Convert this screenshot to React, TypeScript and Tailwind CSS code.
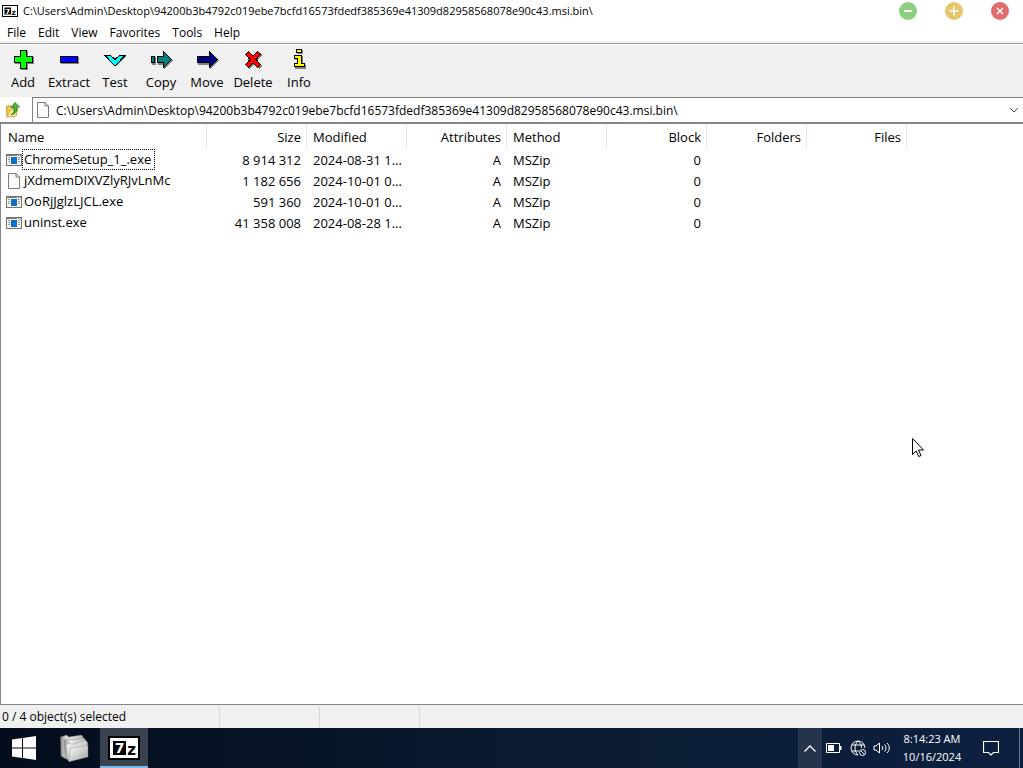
import type { ReactNode } from 'react';

const PATH = 'C:\\Users\\Admin\\Desktop\\94200b3b4792c019ebe7bcfd16573fdedf385369e41309d82958568078e90c43.msi.bin\\';

const menus = ['File', 'Edit', 'View', 'Favorites', 'Tools', 'Help'];

type Tool = {
  label: string;
  icon: ReactNode;
}

const tools: Tool[] = [
  {
    label: 'Add',
    icon: (
      <>
        <path d="M10 3h7v6h6v7h-6v6h-7v-6h-6v-7h6z" fill="#808080" />
        <path d="M9 2h7v6h6v7h-6v6h-7v-6h-6v-7h6z" fill="#000" />
        <path d="M10 3h5v6h6v5h-6v6h-5v-6h-6v-5h6z" fill="#00ff00" />
      </>
    ),
  },
  {
    label: 'Extract',
    icon: (
      <>
        <path d="M4 9h18v7h-18z" fill="#808080" />
        <path d="M3 8h18v7h-18z" fill="#000" />
        <path d="M4 9h16v5h-16z" fill="#0000ff" />
      </>
    ),
  },
  {
    label: 'Test',
    icon: (
      <>
        <path d="M3 8h5l5 4 5-4h5l-10 11z" fill="#808080" />
        <path d="M2 7.5h5.500l4.500 4 4.500-4h5.500l-10 10.500z" fill="#00ffff" stroke="#000" />
      </>
    ),
  },
  {
    label: 'Copy',
    icon: (
      <>
        <path d="M3 9h4v8h-4zM9 9h6v-5l9 9-9 8v-4h-6z" fill="#808080" />
        <path d="M2.500 8.500h3v6h-3zM8.500 8.500h6v-5l8 8-8 8v-5h-6z" fill="#008080" stroke="#000" />
      </>
    ),
  },
  {
    label: 'Move',
    icon: (
      <>
        <path d="M3 9h12v-5l9 9-9 8v-4h-12z" fill="#808080" />
        <path d="M2.500 8.500h12v-5l8 8-8 8v-5h-12z" fill="#000080" stroke="#000" />
      </>
    ),
  },
  {
    label: 'Delete',
    icon: (
      <>
        <path d="M8 4l5 5 5-5 3 3-5 5 5 6-3 3-5-5-5 5-3-3 5-6-5-5z" fill="#808080" />
        <path d="M7.500 3.500l4.500 4.500 4.500-4.500 3 3-4.500 5 4.500 5-3 3-4.500-4.500-4.500 4.500-3-3 4.500-5-4.500-5z" fill="#ff0000" stroke="#000" />
      </>
    ),
  },
  {
    label: 'Info',
    icon: (
      <>
        <path d="M10 2h6v4h-6zM8 8h8v9h3v4h-11v-4h3v-5h-3z" fill="#808080" />
        <path d="M9.500 1.500h5v3h-5zM7.500 7.500h7v8h3v3h-10v-3h3v-5h-3z" fill="#ffff00" stroke="#000" />
      </>
    ),
  },
];

const columns = [
  { name: 'Name', right: false },
  { name: 'Size', right: true },
  { name: 'Modified', right: false },
  { name: 'Attributes', right: true },
  { name: 'Method', right: false },
  { name: 'Block', right: true },
  { name: 'Folders', right: true },
  { name: 'Files', right: true },
];

const files = [
  { name: 'ChromeSetup_1_.exe', size: '8 914 312', modified: '2024-08-31 1...', exe: true, focused: true },
  { name: 'jXdmemDIXVZlyRJvLnMc', size: '1 182 656', modified: '2024-10-01 0...', exe: false, focused: false },
  { name: 'OoRjJglzLJCL.exe', size: '591 360', modified: '2024-10-01 0...', exe: true, focused: false },
  { name: 'uninst.exe', size: '41 358 008', modified: '2024-08-28 1...', exe: true, focused: false },
];

const SevenZipIcon = ({ className }: { className: string }) => (
  <svg className={className} viewBox="0 0 32 24" preserveAspectRatio="xMidYMid meet" aria-hidden="true">
    <rect width="32" height="24" fill="#000" />
    <rect x="2" y="2" width="28" height="20" fill="#fff" />
    <rect x="5" y="5" width="13" height="14" fill="#000" />
    <text x="11.500" y="17" textAnchor="middle" fontFamily="DejaVu Sans" fontWeight="700" fontSize="14" fill="#fff">7</text>
    <text x="23.500" y="19" textAnchor="middle" fontFamily="DejaVu Sans" fontWeight="700" fontSize="15" fill="#000">z</text>
  </svg>
);

const PageIcon = ({ className }: { className: string }) => (
  <svg className={className} viewBox="0 0 12 16" aria-hidden="true">
    <path d="M.5.5h7.500l3.500 3.500v11.500h-11z" fill="#fafafa" stroke="#7a7a7a" />
    <path d="M8 .5v3.500h3.500" fill="none" stroke="#7a7a7a" />
  </svg>
);

const ExeIcon = () => (
  <svg className="h-3 w-4" viewBox="0 0 16 12" shapeRendering="crispEdges" aria-hidden="true">
    <rect width="16" height="12" fill="#767670" />
    <rect x="1" y="2" width="14" height="9" fill="#f4f4f4" />
    <path d="M11 1.500h1M13 1.500h1" stroke="#fff" />
    <rect x="5" y="3" width="6" height="7" fill="#0f6fc6" />
    <path d="M2 3.500h2M2 5.500h2M2 7.500h2M12 3.500h2M12 5.500h2M12 7.500h2" stroke="#999" />
  </svg>
);

const TitleBar = () => (
  <header className="flex h-[22px] items-center bg-white">
    <SevenZipIcon className="ml-[2px] h-3 w-4" />
    <h1 className="ml-[5px] flex-1 truncate text-[11px] leading-4">{PATH}</h1>
    <button aria-label="Minimize" className="flex w-[46px] justify-center">
      <svg className="size-[18px]" viewBox="0 0 18 18">
        <circle cx="9" cy="9" r="9" fill="#8ccf7e" />
        <path d="M5 9h8" stroke="#fff" strokeWidth="2" />
      </svg>
    </button>
    <button aria-label="Maximize" className="flex w-[46px] justify-center">
      <svg className="size-[18px]" viewBox="0 0 18 18">
        <circle cx="9" cy="9" r="9" fill="#e5c76b" />
        <path d="M4.500 9h9M9 4.500v9" stroke="#fff" strokeWidth="1.500" />
      </svg>
    </button>
    <button aria-label="Close" className="flex w-[46px] justify-center">
      <svg className="size-[18px]" viewBox="0 0 18 18">
        <circle cx="9" cy="9" r="9" fill="#e06c6c" />
        <path d="M6 6l6 6M12 6l-6 6" stroke="#fff" strokeWidth="1.500" />
      </svg>
    </button>
  </header>
);

const AddressBar = () => (
  <div className="flex h-[25px] bg-white">
    <button aria-label="Up one level" className="flex w-8 items-center pl-[6px]">
      <svg className="h-4 w-[14px]" viewBox="0 0 14 16">
        <path d="M.5 4.500l4-1 1 1.500 5-.5v9l-9.500 1.500z" fill="#eecb5a" stroke="#c99a2e" />
        <path d="M1 15l3-7 8-1.500-2 7.500z" fill="#fbe795" stroke="#d5aa3d" strokeWidth=".8" />
        <path d="M5 12.500c3-1 3.500-3.500 3-7h-3L9 .5l4.500 4.500h-2.500c.5 4-1 7-6 7.500z" fill="#4eb33c" stroke="#247a1c" strokeWidth=".8" />
      </svg>
    </button>
    <div className="flex min-w-0 flex-1 items-center border-t border-l border-[#828282] pl-[4px]">
      <PageIcon className="h-4 w-3 shrink-0" />
      <input aria-label="Path" defaultValue={PATH} className="ml-[7px] min-w-0 flex-1 pt-[2px] text-[12px] leading-5 outline-none" />
      <button aria-label="Show path list" className="flex h-full w-[18px] items-center justify-center">
        <svg className="h-[6px] w-[10px]" viewBox="0 0 10 6">
          <path d="M1 1l4 4 4-4" fill="none" stroke="#555" />
        </svg>
      </button>
    </div>
  </div>
);

const FileList = () => (
  <main className="min-h-0 flex-1 overflow-hidden border-t-2 border-b border-l border-[#828790] bg-white">
    <table className="w-[906px] table-fixed border-separate border-spacing-0 text-[13px] leading-5">
      <colgroup>
        <col className="w-[206px]" />
        <col span={7} className="w-[100px]" />
      </colgroup>
      <thead>
        <tr className="h-[25px]">
          {columns.map((col) => (
            <th
              key={col.name}
              className={`border-r border-[#e5e5e5] p-0 font-normal ${col.right ? 'pr-[5px] text-right' : 'pl-[6px] text-left first:pl-[7px]'}`}
            >
              {col.name}
            </th>
          ))}
        </tr>
      </thead>
      <tbody>
        {files.map((file) => (
          <tr key={file.name} className="h-[21px]">
            <td className="p-0">
              <div className="flex items-center pl-[5px]">
                <span className="flex w-4 justify-center">
                  {file.exe ? <ExeIcon /> : <PageIcon className="h-4 w-3" />}
                </span>
                <span className={`border border-dotted pr-[3px] pl-px leading-[19px] ${file.focused ? 'border-black' : 'border-transparent'}`}>
                  {file.name}
                </span>
              </div>
            </td>
            <td className="p-0 pr-[6px] text-right">{file.size}</td>
            <td className="p-0 pl-[6px]">{file.modified}</td>
            <td className="p-0 pr-[6px] text-right">A</td>
            <td className="p-0 pl-[6px]">MSZip</td>
            <td className="p-0 pr-[6px] text-right">0</td>
            <td />
            <td />
          </tr>
        ))}
      </tbody>
    </table>
  </main>
);

const Taskbar = () => (
  <nav className="flex h-10 bg-linear-to-r from-[#040d1c] via-[#0a1a30] to-[#0d2040] text-white">
    <div className="flex flex-1 gap-[2px]">
      <button aria-label="Start" className="flex w-12 items-center justify-center">
        <svg className="size-6" viewBox="0 0 24 24" fill="#fff">
          <path d="M0 3.400l10-1.400v9.500h-10zM11 1.900l13-1.900v11.500h-13zM0 12.500h10v9.500l-10-1.400zM11 12.500h13v11.500l-13-1.900z" />
        </svg>
      </button>
      <button aria-label="File Explorer" className="flex w-12 items-center justify-center">
        <svg className="h-7 w-[30px]" viewBox="0 0 30 28">
          <defs>
            <linearGradient id="folderBack" x1="0" y1="0" x2="1" y2="0">
              <stop offset="0" stopColor="#8f8f8f" />
              <stop offset=".3" stopColor="#e8e8e8" />
              <stop offset="1" stopColor="#bdbdbd" />
            </linearGradient>
            <linearGradient id="folderFront" x1="0" y1="0" x2="1" y2="1">
              <stop offset="0" stopColor="#ffffff" />
              <stop offset="1" stopColor="#a0a0a0" />
            </linearGradient>
          </defs>
          <g fill="url(#folderBack)" stroke="#777" strokeWidth=".4">
            <path d="M1.500 3l6-2 2 2 13-2 1.500 2v16l-17 6-5-3z" />
            <path d="M5 6.500l5-2 2 1.500 13-2 1.500 2v16l-15 4.500-5-2z" />
          </g>
          <g fill="url(#folderFront)" stroke="#888" strokeWidth=".4">
            <path d="M7 10.500l4-1 2 1 14-4 1.500 2v14l-18 5-1.500-1z" />
            <path d="M11 14.500l18-3v11.500l-19 4.500z" />
          </g>
        </svg>
      </button>
      <button aria-label="7-Zip File Manager" className="flex w-12 items-center justify-center border-b-2 border-[#76b9ed] bg-[#3b424f]">
        <SevenZipIcon className="mt-[2px] h-6 w-8" />
      </button>
    </div>
    <button aria-label="Show hidden icons" className="flex w-6 items-center justify-center bg-[#26334d]">
      <svg className="h-[7px] w-3" viewBox="0 0 12 7">
        <path d="M.5 6.500l5.500-5.500 5.500 5.500" fill="none" stroke="#fff" strokeWidth="1.300" />
      </svg>
    </button>
    <button aria-label="Battery" className="flex w-6 items-center justify-center">
      <svg className="h-[10px] w-4" viewBox="0 0 16 10">
        <path d="M.5 .5h13v9h-13z" fill="none" stroke="#fff" />
        <path d="M2 2h6v6h-6zM14 3h1.500v4h-1.500z" fill="#fff" />
      </svg>
    </button>
    <button aria-label="Network" className="flex w-6 items-center justify-center">
      <svg className="size-4" viewBox="0 0 16 16" fill="none" stroke="#fff">
        <path d="M15 8a7 7 0 1 0-7 7M1.800 5h12.500M1.800 11h7M8 1c-4 4-4 10 0 14M8 1c2.500 2 3.500 4.500 3.500 7" />
        <circle cx="12.500" cy="12.500" r="3" fill="#0d2040" />
        <path d="M10.500 10.500l4 4" />
      </svg>
    </button>
    <button aria-label="Volume" className="flex w-6 items-center justify-center">
      <svg className="h-3 w-[18px]" viewBox="0 0 18 12" fill="none" stroke="#fff">
        <path d="M1 4h2l3.500-3v10l-3.500-3h-2zM9 4c1 1 1 3 0 4M11.500 2.500c2 2 2 5 0 7M14 1c3 3 3 7 0 10" />
      </svg>
    </button>
    <time className="w-[76px] pt-[2px] text-center text-[11px] leading-[18px] whitespace-nowrap">
      8:14:23 AM
      <br />
      10/16/2024
    </time>
    <button aria-label="Notifications" className="flex w-[42px] items-center justify-center">
      <svg className="size-4" viewBox="0 0 16 16">
        <path d="M.5 1.500h15v11h-5l-2.500 2.500-2.500-2.500h-5z" fill="none" stroke="#fff" strokeWidth="1.200" />
      </svg>
    </button>
    <button aria-label="Show desktop" className="ml-[7px] w-1 border-l border-[#6c7788]" />
  </nav>
);

const App = () => {
  return (
    <div className="relative flex h-screen flex-col overflow-hidden bg-[#f0f0f0] font-['Open_Sans','Noto_Sans',sans-serif] text-black">
      <TitleBar />
      <nav className="flex h-[19px] items-end bg-white pl-px text-[12px] leading-4">
        {menus.map((menu) => (
          <button key={menu} className="px-[6px]">{menu}</button>
        ))}
      </nav>
      <div className="flex h-14 shrink-0 flex-col pt-[2px]">
        <div className="h-[2px] border-t border-b border-t-[#a0a0a0] border-b-white" />
        <div className="flex pt-[3px]">
          {tools.map((tool) => (
            <button key={tool.label} className="flex w-[46px] flex-col items-center text-[13px] leading-5">
              <svg className="size-6" viewBox="0 0 24 24" shapeRendering="crispEdges" aria-hidden="true">{tool.icon}</svg>
              {tool.label}
            </button>
          ))}
        </div>
      </div>
      <AddressBar />
      <FileList />
      <footer className="flex h-[23px] items-center pt-px text-[12px]">
        <span className="w-[220px] border-r border-[#d7d7d7] pl-[2px] leading-5">0 / 4 object(s) selected</span>
        <span className="h-5 w-[100px] border-r border-[#d7d7d7]" />
        <span className="h-5 w-[100px] border-r border-[#d7d7d7]" />
      </footer>
      <Taskbar />

      {/* mouse pointer */}
      <svg className="pointer-events-none absolute top-[438px] left-[912px] h-5 w-3" viewBox="0 0 12 20">
        <path d="M.5.5v16l3.700-3.500 2.500 5.500 2.300-1-2.500-5.500h5z" fill="#fff" stroke="#000" />
      </svg>
    </div>
  )
}

export default App;
